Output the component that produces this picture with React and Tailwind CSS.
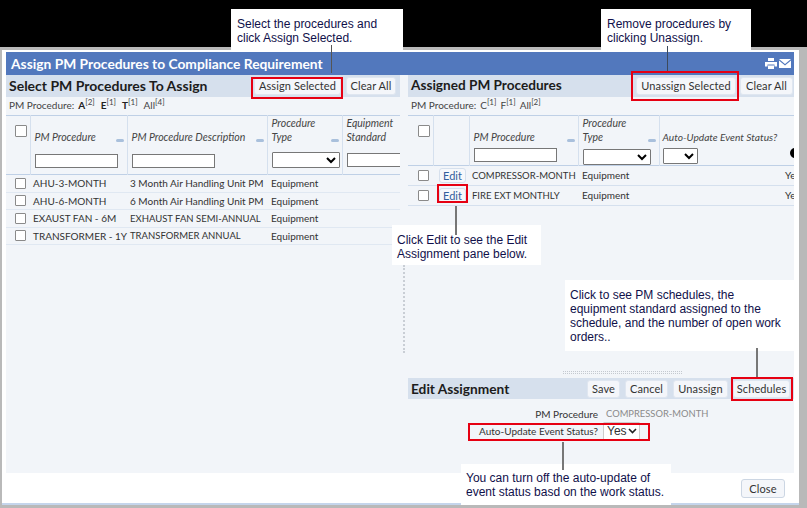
import React from "react";

const ui = "font-['Lato','Noto_Sans',sans-serif]";

function Btn({ children, className = "" }) {
  return (
    <button className={`h-[18px] rounded-[3px] border border-[#dfe6f0] bg-[#f4f6fa] pb-[1px] text-[11px] leading-none text-[#333] tracking-[0.1px] ${className}`}>
      {children}
    </button>
  );
}

function Check({ className = "" }) {
  return <span className={`block h-[11px] w-[11px] rounded-[1px] border border-[#8a8a8a] bg-white ${className}`} />;
}

function SortDash() {
  return <span className="absolute right-[3px] top-[23px] h-[3px] w-[8px] rounded-full bg-[#a9c0dc]" />;
}

function HeadText({ children }) {
  return <div className="text-[10.5px] italic leading-[13.5px] text-[#444]">{children}</div>;
}

function FilterInput({ className = "" }) {
  return <input className={`block h-[14px] border border-[#777] bg-white ${className}`} />;
}

function Sel({ className = "" }) {
  return (
    <select className={`block h-[16px] rounded-[1px] border border-[#777] bg-white text-[11px] ${className}`}>
      <option></option>
    </select>
  );
}

function Callout({ className, lines }) {
  return (
    <div className={`absolute bg-white font-['Liberation_Sans',Arial,sans-serif] text-[12px] leading-[13.5px] text-[#10104a] ${className}`}>
      {lines.map((l) => (
        <div key={l} className="whitespace-nowrap">{l}</div>
      ))}
    </div>
  );
}

const leftRows = [
  ["AHU-3-MONTH", "3 Month Air Handling Unit PM", "text-[10px]"],
  ["AHU-6-MONTH", "6 Month Air Handling Unit PM", "text-[10px]"],
  ["EXAUST FAN - 6M", "EXHAUST FAN SEMI-ANNUAL", "text-[9.5px]"],
  ["TRANSFORMER - 1Y", "TRANSFORMER ANNUAL", "text-[9.5px]"],
];

function LeftPane() {
  return (
    <div className="flex w-[394px] shrink-0 flex-col overflow-hidden">
      <div className="flex h-[22px] items-center bg-[#d6e0ed] pl-[3px]">
        <h2 className="flex-1 text-[14px] font-bold leading-none text-[#1c1c1c]">Select PM Procedures To Assign</h2>
        <Btn className="mr-[5px] w-[87px]">Assign Selected</Btn>
        <Btn className="mr-[4px] w-[50px]">Clear All</Btn>
      </div>
      <div className="flex h-[18px] items-center gap-[6px] pb-[2px] pl-[3px] text-[10px] text-[#444]">
        <span className="mr-[-2px]">PM Procedure:</span>
        <span><b className="text-[#222]">A</b><sup className="text-[8px]">[2]</sup></span>
        <span><b className="text-[#222]">E</b><sup className="text-[8px]">[1]</sup></span>
        <span><b className="text-[#222]">T</b><sup className="text-[8px]">[1]</sup></span>
        <span>All<sup className="text-[8px]">[4]</sup></span>
      </div>
      <table className="w-[430px] table-fixed border-collapse">
        <colgroup>
          <col className="w-[24px]" />
          <col className="w-[97px]" />
          <col className="w-[140px]" />
          <col className="w-[75px]" />
          <col className="w-[94px]" />
        </colgroup>
        <thead>
          <tr className="h-[59px] border-y border-[#bfd0e6] align-top">
            <th className="border-r border-[#d5e0ee] pl-[9px] pt-[9px] font-normal"><Check className="h-[12px] w-[12px]" /></th>
            <th className="relative border-r border-[#d5e0ee] pl-[4px] pt-[15px] text-left font-normal"><HeadText>PM Procedure</HeadText><SortDash /><FilterInput className="mt-[9px] w-[83px]" /></th>
            <th className="relative border-r border-[#d5e0ee] pl-[4px] pt-[15px] text-left font-normal"><HeadText>PM Procedure Description</HeadText><SortDash /><FilterInput className="mt-[9px] w-[83px]" /></th>
            <th className="relative border-r border-[#d5e0ee] pl-[4px] pt-[1px] text-left font-normal"><HeadText>Procedure<br />Type</HeadText><SortDash /><Sel className="mt-[8px] w-[68px]" /></th>
            <th className="relative pl-[4px] pt-[1px] text-left font-normal"><HeadText>Equipment<br />Standard</HeadText><FilterInput className="mt-[9px] w-[83px]" /></th>
          </tr>
        </thead>
        <tbody className="text-[10px] text-[#333]">
          {leftRows.map(([a, b, size]) => (
            <tr key={a} className="h-[17.5px] border-b border-[#e0e8f2]">
              <td className="pl-[9px]"><Check /></td>
              <td className="whitespace-nowrap pl-[3px] pt-[1px]">{a}</td>
              <td className={`whitespace-nowrap pl-[3px] pt-[1px] ${size}`}>{b}</td>
              <td className="pl-[4px] pt-[1px]">Equipment</td>
              <td></td>
            </tr>
          ))}
        </tbody>
      </table>
    </div>
  );
}

function RightPane() {
  return (
    <div className="flex min-w-0 flex-1 flex-col overflow-hidden">
      <div className="flex h-[22px] items-center bg-[#d6e0ed] pl-[3px]">
        <h2 className="flex-1 text-[13.6px] font-bold leading-none text-[#1c1c1c]">Assigned PM Procedures</h2>
        <Btn className="mr-[4px] w-[100px]">Unassign Selected</Btn>
        <Btn className="mr-[1px] w-[53px]">Clear All</Btn>
      </div>
      <div className="flex h-[18px] items-center gap-[4px] pb-[2px] pl-[3px] text-[10px] text-[#444]">
        <span>PM Procedure:</span>
        <span>C<sup className="text-[8px]">[1]</sup></span>
        <span>F<sup className="text-[8px]">[1]</sup></span>
        <span>All<sup className="text-[8px]">[2]</sup></span>
      </div>
      <table className="w-[420px] table-fixed border-collapse">
        <colgroup>
          <col className="w-[25px]" />
          <col className="w-[36px]" />
          <col className="w-[109px]" />
          <col className="w-[81px]" />
          <col className="w-[126px]" />
          <col className="w-[43px]" />
        </colgroup>
        <thead>
          <tr className="h-[49px] border-y border-[#bfd0e6] align-top">
            <th className="border-r border-[#d5e0ee] pl-[10px] pt-[9px] font-normal"><Check className="h-[12px] w-[12px]" /></th>
            <th className="border-r border-[#d5e0ee]"></th>
            <th className="relative border-r border-[#d5e0ee] pl-[4px] pt-[15px] text-left font-normal"><HeadText>PM Procedure</HeadText><SortDash /><FilterInput className="mt-[3px] w-[83px]" /></th>
            <th className="relative border-r border-[#d5e0ee] pl-[4px] pt-[1px] text-left font-normal"><HeadText>Procedure<br />Type</HeadText><SortDash /><Sel className="mt-[5px] w-[68px]" /></th>
            <th className="relative pl-[3px] pt-[15px] text-left font-normal"><div className="whitespace-nowrap text-[10.2px] italic leading-[13.5px] text-[#444]">Auto-Update Event Status?</div><Sel className="mt-[3px] w-[35px]" /></th>
            <th className="relative pl-[5px] pt-[32px] text-left font-normal"><span className="block h-[10px] w-[10px] rounded-full bg-black" /></th>
          </tr>
        </thead>
        <tbody className="text-[10px] text-[#333]">
          {["COMPRESSOR-MONTH", "FIRE EXT MONTHLY"].map((n) => (
            <tr key={n} className="h-[20px] border-b border-[#d5e0ee]">
              <td className="pl-[10px]"><Check /></td>
              <td><button className="ml-[6px] h-[15px] w-[27px] rounded-[3px] border border-[#d6e0ed] bg-[#f6f8fb] text-[11px] leading-none text-[#33609c]">Edit</button></td>
              <td className="whitespace-nowrap pl-[3px] pt-[1px] text-[9.5px]">{n}</td>
              <td className="pl-[4px]">Equipment</td>
              <td></td>
              <td>Yes</td>
            </tr>
          ))}
        </tbody>
      </table>
      <div className="flex-1" />
      <div className="mb-[4px] ml-[155px] h-[3px] w-[119px] border-y border-dotted border-[#c4c9d0]" />
      <div className="flex h-[21px] items-center bg-[#d6e0ed] pl-[3px]">
        <h2 className="flex-1 text-[13.7px] font-bold leading-none text-[#1c1c1c]">Edit Assignment</h2>
        <Btn className="mr-[5px] w-[33px]">Save</Btn>
        <Btn className="mr-[5px] w-[43px]">Cancel</Btn>
        <Btn className="mr-[5px] w-[55px]">Unassign</Btn>
        <Btn className="mr-[4px] w-[57px]">Schedules</Btn>
      </div>
      <div className="grid h-[74px] grid-cols-[190px_1fr] content-start gap-x-[8px] pt-[8px] text-[10px] leading-[14px] text-[#333]">
        <div className="text-right">PM Procedure</div>
        <div className="text-[9.4px] text-[#8a8a8a]">COMPRESSOR-MONTH</div>
        <div className="mt-[3px] text-right">Auto-Update Event Status?</div>
        <div className="relative ml-[-3px] mt-[1px] h-[18px] w-[37px]">
          <select defaultValue="Yes" className="block h-full w-full appearance-none rounded-[1px] border border-[#ccc] bg-white pl-[3px] font-['Liberation_Sans',Arial,sans-serif] text-[12px] text-[#333]"><option>Yes</option></select>
          <svg width="9" height="6" viewBox="0 0 9 6" className="pointer-events-none absolute right-[3px] top-[6px]">
            <path d="M1 1l3.5 3.5L8 1" fill="none" stroke="#222" strokeWidth="1.6" />
          </svg>
        </div>
      </div>
    </div>
  );
}

export default function App() {
  return (
    <div className={`relative h-[508px] w-[807px] overflow-hidden bg-black pt-[47px] ${ui}`}>
      <div className="flex h-[461px] flex-col bg-[#b9b9b9] pb-[3px] pl-[2px] pr-[8px] pt-[3px]">
        <div className="flex min-h-0 flex-1 flex-col border-b-2 border-[#c5d5ec] bg-white pl-[4px] pr-[5px] pt-[2px]">
          <div className="flex h-[23px] shrink-0 items-center bg-[#5278bd] pl-[5px] pr-[3px]">
            <h1 className="flex-1 text-[13.8px] font-bold leading-none text-white">Assign PM Procedures to Compliance Requirement</h1>
            <svg width="12" height="11" viewBox="0 0 12 11" className="mr-[2px]">
              <path fill="#fff" d="M3 0h6v3H3zM0 4h12v4.5H9.5V6.5h-7v2H0zM3 7.5h6V11H3z" />
            </svg>
            <svg width="12" height="9" viewBox="0 0 12 9">
              <path fill="#fff" d="M0 0h12L6 5zM0 1.6l6 5 6-5V9H0z" />
            </svg>
          </div>
          <div className="flex h-[398px] shrink-0 bg-[#f2f5f9]">
            <LeftPane />
            <div className="ml-[3px] mr-[3px] mt-[190px] h-[88px] w-[2px] shrink-0 border-l-2 border-dotted border-[#c9ced5]" />
            <RightPane />
          </div>
          <div className="flex flex-1 items-start justify-end pr-[9px] pt-[6px]">
            <Btn className="!h-[19px] w-[44px] !border-[#ccd6e3]">Close</Btn>
          </div>
        </div>
      </div>

      <Callout className="left-[231px] top-[9px] h-[43px] w-[172px] pl-[6px] pt-[9px]" lines={["Select the procedures and", "click Assign Selected."]} />
      <Callout className="left-[601px] top-[9px] h-[41px] w-[150px] pl-[6px] pt-[9px]" lines={["Remove procedures by", "clicking Unassign."]} />
      <Callout className="left-[392px] top-[225px] h-[40px] w-[149px] pl-[5px] pt-[9px]" lines={["Click Edit to see the Edit", "Assignment pane below."]} />
      <Callout className="left-[565px] top-[280px] h-[71px] w-[229px] pl-[5px] pt-[8px] !leading-[14px]" lines={["Click to see PM schedules, the", "equipment standard assigned to the", "schedule, and the number of open work", "orders.."]} />
      <Callout className="left-[461px] top-[464px] h-[41px] w-[210px] pl-[5px] pt-[8px]" lines={["You can turn off the auto-update of", "event status basd on the work status."]} />

      <span className="absolute left-[331px] top-[45px] h-[28px] w-[1px] bg-[#555]" />
      <span className="absolute left-[667px] top-[46px] h-[27px] w-[1px] bg-[#3d4a5c]" />
      <span className="absolute left-[455px] top-[206px] h-[29px] w-[2px] bg-[#777]" />
      <span className="absolute left-[756px] top-[348px] h-[30px] w-[2px] bg-[#777]" />
      <span className="absolute left-[562px] top-[442px] h-[28px] w-[2px] bg-[#777]" />

      <span className="absolute left-[251px] top-[77px] h-[22px] w-[92px] border-2 border-[#e60012]" />
      <span className="absolute left-[631px] top-[71px] h-[30px] w-[108px] border-2 border-[#e60012]" />
      <span className="absolute left-[437px] top-[184px] h-[19px] w-[31px] border-2 border-[#e60012]" />
      <span className="absolute left-[731px] top-[377px] h-[24px] w-[62px] border-2 border-[#e60012]" />
      <span className="absolute left-[468px] top-[423px] h-[18px] w-[182px] border-2 border-[#e60012]" />
    </div>
  );
}
